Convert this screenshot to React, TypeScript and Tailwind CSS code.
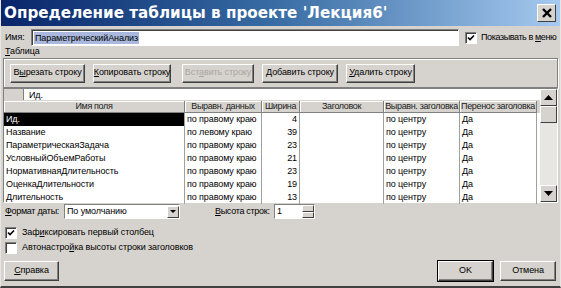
import React from 'react';

const rows = [
  ['Ид.', 'по правому краю', '4', '', 'по центру', 'Да'],
  ['Название', 'по левому краю', '39', '', 'по центру', 'Да'],
  ['ПараметрическаяЗадача', 'по правому краю', '23', '', 'по центру', 'Да'],
  ['УсловныйОбъемРаботы', 'по правому краю', '21', '', 'по центру', 'Да'],
  ['НормативнаяДлительность', 'по правому краю', '23', '', 'по центру', 'Да'],
  ['ОценкаДлительности', 'по правому краю', '19', '', 'по центру', 'Да'],
  ['Длительность', 'по правому краю', '13', '', 'по центру', 'Да'],
];

const cols = [
  { title: 'Имя поля', w: 'w-[181px]' },
  { title: 'Выравн. данных', w: 'w-[77px]' },
  { title: 'Ширина', w: 'w-[38px]' },
  { title: 'Заголовок', w: 'w-[84px]' },
  { title: 'Выравн. заголовка', w: 'w-[76px]' },
  { title: 'Перенос заголовка', w: 'w-[77px]' },
];

const raised = 'bg-[#d6d3ce] border border-t-white border-l-white border-r-[#404040] border-b-[#404040]';
const sunken = 'border border-t-[#808080] border-l-[#808080] border-r-white border-b-white';

function Btn({ children, disabled, className = '' }: { children: React.ReactNode; disabled?: boolean; className?: string }) {
  return (
    <div
      className={`h-[19px] flex items-center justify-center ${raised} shadow-[inset_-1px_-1px_0_#808080] ${disabled ? 'text-[#a9a6a0]' : 'text-black'} ${className}`}
    >
      <span>{children}</span>
    </div>
  );
}

function Check({ on }: { on?: boolean }) {
  return (
    <div className={`w-[12px] h-[12px] shrink-0 bg-white ${sunken} shadow-[inset_1px_1px_0_#404040] flex items-center justify-center`}>
      {on && (
        <svg width="8" height="8" viewBox="0 0 8 8">
          <path d="M1 3.5 L3 5.5 L7 1.5" stroke="black" strokeWidth="1.6" fill="none" />
        </svg>
      )}
    </div>
  );
}

function Arrow({ up }: { up?: boolean }) {
  return (
    <div className={`w-[17px] h-[17px] ${raised} flex items-center justify-center`}>
      <svg width="9" height="5" viewBox="0 0 9 5">
        <path d={up ? 'M0 5 L4.5 0 L9 5 Z' : 'M0 0 L4.5 5 L9 0 Z'} fill="black" />
      </svg>
    </div>
  );
}

export default function App() {
  return (
    <div className="w-[561px] h-[288px] bg-[#d6d3ce] flex flex-col overflow-hidden whitespace-nowrap text-[9px] tracking-[-0.1px] font-['Liberation_Sans',sans-serif] text-black border-x border-x-[#e8e6e2] border-b-2 border-b-[#404040]">
      {/* Title bar */}
      <div className="h-[26px] shrink-0 flex items-center justify-between pl-[3px] pr-[4px] bg-gradient-to-r from-[#0a246a] via-[#3a6ea5] to-[#a6caf0]">
        <span className="text-white font-bold text-[15.2px] tracking-normal font-['DejaVu_Sans',sans-serif]">
          Определение таблицы в проекте 'Лекция6'
        </span>
        <div className={`w-[19px] h-[18px] ${raised} flex items-center justify-center`}>
          <svg width="10" height="10" viewBox="0 0 10 10">
            <path d="M1 1 L9 9 M9 1 L1 9" stroke="black" strokeWidth="2.4" />
          </svg>
        </div>
      </div>

      {/* Name row */}
      <div className="flex items-center mt-[3px] pl-[4px] h-[17px] shrink-0">
        <span className="w-[26px]">Имя:</span>
        <div className={`w-[428px] h-[17px] bg-white ${sunken} shadow-[inset_1px_1px_0_#404040] flex items-center pl-[2px]`}>
          <span className="bg-[#a9b8dc] px-[1px] leading-[12px]">ПараметрическийАнализ</span>
        </div>
        <div className="ml-[6px] flex items-center gap-[4px]">
          <Check on />
          <span className="tracking-[-0.4px]">
            Показывать в <u>м</u>еню
          </span>
        </div>
      </div>

      <div className="pl-[4px] h-[11px] leading-[11px] shrink-0">
        <u>Т</u>аблица
      </div>

      {/* Group of row buttons */}
      <div className="mx-[2px] mt-[1px] h-[30px] shrink-0 border border-[#808080] shadow-[inset_1px_1px_0_white,1px_1px_0_white] flex items-center pl-[6px] gap-[8px]">
        <Btn className="w-[75px]">
          В<u>ы</u>резать строку
        </Btn>
        <Btn className="w-[78px]">
          <u>К</u>опировать строку
        </Btn>
        <Btn className="w-[72px] ml-[3px]" disabled>
          Вст<u>а</u>вить строку
        </Btn>
        <Btn className="w-[76px]">
          <u>Д</u>обавить строку
        </Btn>
        <Btn className="w-[69px]">
          <u>У</u>далить строку
        </Btn>
      </div>

      {/* Grid */}
      <div className={`mx-[2px] h-[115px] shrink-0 ${sunken} bg-white flex`}>
        <div className="flex-1 flex flex-col">
          <div className="h-[12px] flex border-b border-[#d6d3ce]">
            <div className="w-[20px] bg-[#d6d3ce] border-r border-[#808080]" />
            <span className="pl-[5px] leading-[12px]">Ид.</span>
          </div>
          <div className="h-[12px] flex bg-[#d6d3ce]">
            {cols.map((c) => (
              <div
                key={c.title}
                className={`${c.w} shrink-0 overflow-hidden text-center leading-[11px] border-r border-b border-r-[#808080] border-b-[#808080] shadow-[inset_1px_1px_0_white] text-[#222] tracking-[-0.35px]`}
              >
                {c.title}
              </div>
            ))}
          </div>
          {rows.map((r, i) => (
            <div key={i} className="h-[13px] flex">
              {r.map((cell, j) => (
                <div
                  key={j}
                  className={`${cols[j].w} shrink-0 leading-[13px] px-[2px] border-r border-[#a0a0a0] overflow-hidden ${
                    j === 2 ? 'text-right' : ''
                  } ${i === 0 && j === 0 ? 'bg-black text-white' : ''}`}
                >
                  {cell}
                </div>
              ))}
            </div>
          ))}
        </div>
        <div className="w-[17px] bg-[#e8e6e2] flex flex-col justify-between">
          <div>
            <Arrow up />
            <div className={`h-[17px] ${raised}`} />
          </div>
          <Arrow />
        </div>
      </div>

      {/* Date format / row height */}
      <div className="flex items-center pl-[4px] mt-[1px] h-[15px] shrink-0">
        <span className="w-[59px] tracking-[-0.3px]">
          <u>Ф</u>ормат даты:
        </span>
        <div className={`w-[116px] h-[15px] bg-white ${sunken} flex items-center justify-between pl-[2px]`}>
          <span>По умолчанию</span>
          <div className={`w-[12px] h-[12px] ${raised} flex items-center justify-center`}>
            <svg width="6" height="3" viewBox="0 0 6 3">
              <path d="M0 0 L3 3 L6 0 Z" fill="black" />
            </svg>
          </div>
        </div>
        <span className="ml-[35px] w-[59px] tracking-[-0.3px]">
          <u>В</u>ысота строк:
        </span>
        <div className={`w-[41px] h-[15px] bg-white ${sunken} flex items-center justify-between pl-[2px]`}>
          <span>1</span>
          <div className="w-[12px] h-[13px] flex flex-col">
            <div className={`h-[6.5px] ${raised}`} />
            <div className={`h-[6.5px] ${raised}`} />
          </div>
        </div>
      </div>

      <div className="flex items-center gap-[5px] pl-[4px] mt-[7px] h-[13px] shrink-0">
        <Check on />
        <span>
          Заф<u>и</u>ксировать первый столбец
        </span>
      </div>
      <div className="flex items-center gap-[5px] pl-[4px] mt-[2px] h-[13px] shrink-0">
        <Check />
        <span>
          Автонастро<u>й</u>ка высоты строки заголовков
        </span>
      </div>

      <div className="flex items-center mt-[auto] mb-[5px] pl-[3px] pr-[4px]">
        <Btn className="w-[55px] h-[20px]">
          <u>С</u>правка
        </Btn>
        <div className="flex-1" />
        <Btn className="w-[55px] h-[20px] outline outline-1 outline-black">OK</Btn>
        <Btn className="w-[56px] h-[20px] ml-[7px]">Отмена</Btn>
      </div>
    </div>
  );
}
